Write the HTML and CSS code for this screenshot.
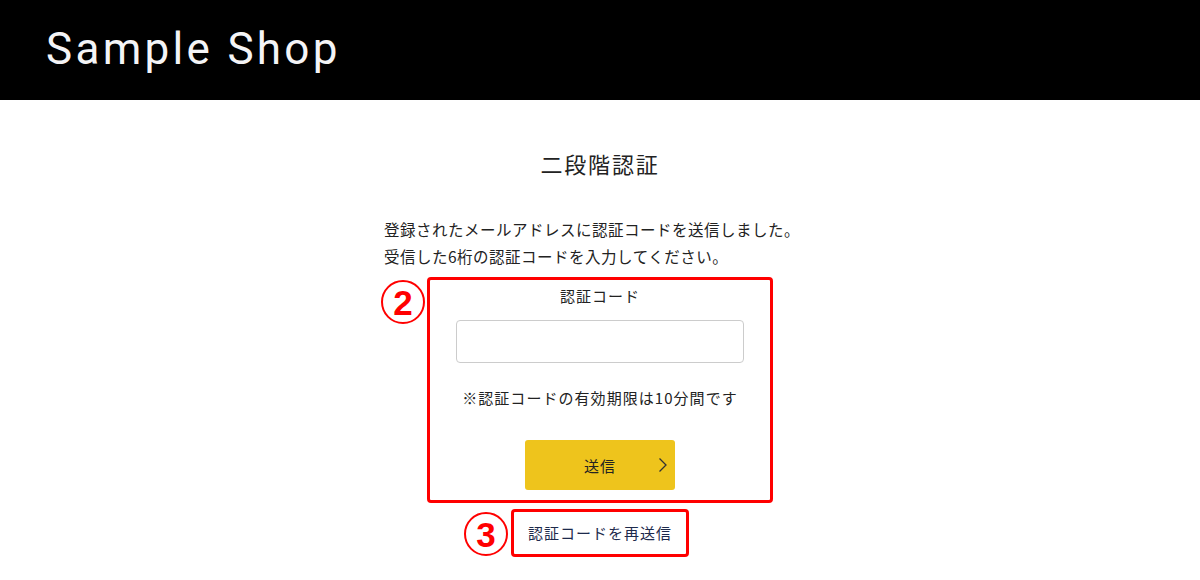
FILE: index.html
```html
<!DOCTYPE html>
<html lang="ja">
<head>
    <meta charset="UTF-8">
    <meta name="viewport" content="width=device-width, initial-scale=1.0">
    <title>二段階認証 - Sample Shop</title>
    <link rel="stylesheet" href="styles.css">
</head>
<body>
    <header class="site-header">
        <h1 class="site-title">Sample Shop</h1>
    </header>
    <main class="auth">
        <h2 class="auth-title">二段階認証</h2>
        <p class="auth-lead">登録されたメールアドレスに認証コードを送信しました。<br>受信した6桁の認証コードを入力してください。</p>
        <form class="auth-form highlight" onsubmit="return false;">
            <span class="mark">2</span>
            <label class="auth-label" for="code">認証コード</label>
            <input class="auth-input" id="code" type="text" inputmode="numeric" maxlength="6">
            <p class="auth-note">※認証コードの有効期限は10分間です</p>
            <button class="submit-button" type="submit">
                送信
                <svg class="chevron" width="10" height="16" viewBox="0 0 10 16"><path d="M1.5 1.5 L8 8 L1.5 14.5" fill="none" stroke="#333" stroke-width="1.3"/></svg>
            </button>
        </form>
        <div class="resend-row">
            <a class="resend-link highlight" href="#">
                <span class="mark">3</span>
                認証コードを再送信
            </a>
        </div>
    </main>
</body>
</html>
```

FILE: styles.css
```css
body {
    margin: 0;
    background-color: #fff;
    color: #222;
    font-family: "Noto Sans CJK JP", "Noto Sans", sans-serif;
}
.site-header {
    height: 100px;
    background-color: #000;
    padding-left: 46px;
    display: flex;
    align-items: center;
}
.site-title {
    margin: 0;
    color: #f4f4f6;
    font-family: Roboto, "Noto Sans", sans-serif;
    font-weight: 400;
    font-size: 44px;
    letter-spacing: 3.3px;
    line-height: 1;
    padding-bottom: 2px;
}
.auth {
    display: flex;
    flex-direction: column;
    align-items: center;
}
.auth-title {
    margin: 47px 0 0;
    font-size: 22px;
    font-weight: 400;
    line-height: 33px;
    letter-spacing: 1.8px;
}
.auth-lead {
    width: 432px;
    margin: 36px 0 0;
    font-size: 15.5px;
    line-height: 27px;
    letter-spacing: 0.5px;
}
.highlight {
    position: relative;
    border: 3px solid #f00;
    border-radius: 4px;
}
.mark {
    position: absolute;
    top: 0;
    left: -49px;
    width: 40px;
    height: 40px;
    border: 2px solid #f00;
    border-radius: 50%;
    color: #f00;
    font-family: "Liberation Sans", Arial, sans-serif;
    font-weight: 700;
    font-size: 35px;
    line-height: 41px;
    text-align: center;
    letter-spacing: 0;
}
.auth-form {
    width: 340px;
    margin: 7px 0 0;
    padding: 4px 0 10px;
    display: flex;
    flex-direction: column;
    align-items: center;
}
.auth-label {
    font-size: 15px;
    line-height: 24px;
    letter-spacing: 1px;
}
.auth-input {
    box-sizing: border-box;
    width: 288px;
    height: 43px;
    margin-top: 12px;
    border: 1px solid #ccc;
    border-radius: 4px;
    font-size: 16px;
    padding: 0 10px;
}
.auth-note {
    margin: 23px 0 0;
    font-size: 15px;
    line-height: 24px;
    letter-spacing: 1.05px;
}
.submit-button {
    position: relative;
    width: 150px;
    height: 50px;
    margin-top: 30px;
    border: none;
    border-radius: 3px;
    background-color: #eec41c;
    color: #222;
    font-family: inherit;
    font-size: 15px;
    letter-spacing: 1px;
    cursor: pointer;
}
.chevron {
    position: absolute;
    right: 7px;
    top: 17px;
}
.resend-row {
    margin-top: 6px;
}
.resend-link {
    display: block;
    padding: 9px 14px;
    color: #1d2a4c;
    font-size: 15px;
    line-height: 24px;
    letter-spacing: 1px;
    text-decoration: none;
}
.resend-link .mark {
    left: -50px;
}
```
